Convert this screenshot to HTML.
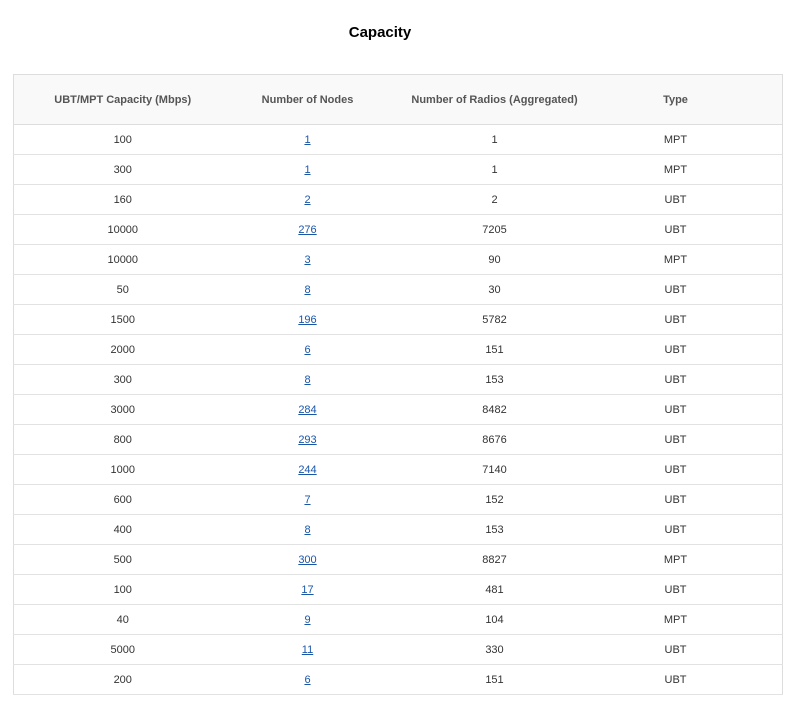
<!DOCTYPE html>
<html><head><meta charset="utf-8"><style>
body{margin:0;background:#fff;font-family:"Liberation Sans",sans-serif;width:793px;height:705px;overflow:hidden}
h1{position:absolute;left:0;width:760px;top:23px;margin:0;text-align:center;font-size:15px;font-weight:bold;color:#000;line-height:20px}
table{position:absolute;left:13px;top:74px;width:770px;border-collapse:collapse;border:1px solid #ddd;font-size:11px;color:#333}
th{background:#f9f9f9;height:49px;font-weight:bold;color:#555;border-bottom:1px solid #ddd;padding:0}
td{height:29px;border-bottom:1px solid #e2e2e2;text-align:center;padding:0}
a{color:#1a56a8;text-decoration:underline}
</style></head><body>
<h1>Capacity</h1>
<table>
<colgroup><col style="width:218px"><col style="width:152px"><col style="width:222px"><col style="width:140px"><col></colgroup>
<tr><th>UBT/MPT Capacity (Mbps)</th><th>Number of Nodes</th><th>Number of Radios (Aggregated)</th><th>Type</th><th></th></tr>
<tr><td>100</td><td><a>1</a></td><td>1</td><td>MPT</td><td></td></tr>
<tr><td>300</td><td><a>1</a></td><td>1</td><td>MPT</td><td></td></tr>
<tr><td>160</td><td><a>2</a></td><td>2</td><td>UBT</td><td></td></tr>
<tr><td>10000</td><td><a>276</a></td><td>7205</td><td>UBT</td><td></td></tr>
<tr><td>10000</td><td><a>3</a></td><td>90</td><td>MPT</td><td></td></tr>
<tr><td>50</td><td><a>8</a></td><td>30</td><td>UBT</td><td></td></tr>
<tr><td>1500</td><td><a>196</a></td><td>5782</td><td>UBT</td><td></td></tr>
<tr><td>2000</td><td><a>6</a></td><td>151</td><td>UBT</td><td></td></tr>
<tr><td>300</td><td><a>8</a></td><td>153</td><td>UBT</td><td></td></tr>
<tr><td>3000</td><td><a>284</a></td><td>8482</td><td>UBT</td><td></td></tr>
<tr><td>800</td><td><a>293</a></td><td>8676</td><td>UBT</td><td></td></tr>
<tr><td>1000</td><td><a>244</a></td><td>7140</td><td>UBT</td><td></td></tr>
<tr><td>600</td><td><a>7</a></td><td>152</td><td>UBT</td><td></td></tr>
<tr><td>400</td><td><a>8</a></td><td>153</td><td>UBT</td><td></td></tr>
<tr><td>500</td><td><a>300</a></td><td>8827</td><td>MPT</td><td></td></tr>
<tr><td>100</td><td><a>17</a></td><td>481</td><td>UBT</td><td></td></tr>
<tr><td>40</td><td><a>9</a></td><td>104</td><td>MPT</td><td></td></tr>
<tr><td>5000</td><td><a>11</a></td><td>330</td><td>UBT</td><td></td></tr>
<tr><td>200</td><td><a>6</a></td><td>151</td><td>UBT</td><td></td></tr>
</table>
</body></html>
